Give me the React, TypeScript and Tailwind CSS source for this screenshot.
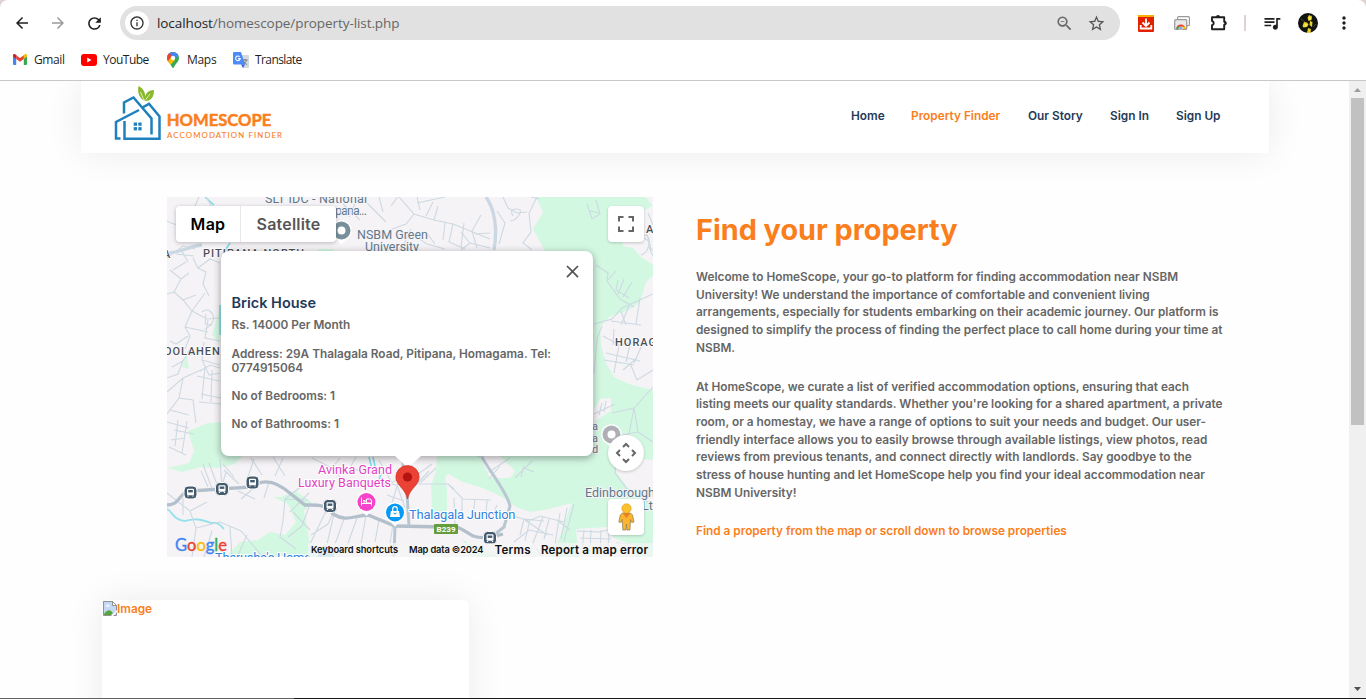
import React from 'react';
import {
  MdArrowBack,
  MdArrowForward,
  MdRefresh,
  MdInfoOutline,
  MdZoomOut,
  MdStarBorder,
  MdQueueMusic,
  MdMoreVert,
  MdClose,
} from 'react-icons/md';

const GmailIcon = () => (
  <svg width="14" height="11" viewBox="0 0 14 11">
    <path d="M0 1.5V10a1 1 0 0 0 1 1h2.2V4.2z" fill="#4285f4" />
    <path d="M14 1.5V10a1 1 0 0 1-1 1h-2.2V4.2z" fill="#34a853" />
    <path d="M10.8 1.2V4.9L14 2.6V1.4C14 .1 12.500-.4 11.500.5z" fill="#fbbc04" />
    <path d="M3.200 1.200 7 4l3.800-2.800v3.700L7 7.700 3.200 4.900z" fill="#ea4335" />
    <path d="M0 1.400v1.200l3.200 2.300V1.200L2.500.5C1.500-.4 0 .1 0 1.400z" fill="#c5221f" />
  </svg>
);

const YouTubeIcon = () => (
  <svg width="16" height="12" viewBox="0 0 16 12">
    <rect width="16" height="12" rx="3" fill="#f00" />
    <path d="M6.200 3.500v5L10.500 6z" fill="#fff" />
  </svg>
);

const MapsIcon = () => (
  <svg width="12" height="16" viewBox="0 0 12 16">
    <defs>
      <clipPath id="pin-clip">
        <path d="M6 0a6 6 0 0 0-6 6c0 3 2 4.200 3.500 6.400C4.800 14 5.200 16 6 16s1.200-2 2.500-3.600C10 10.200 12 9 12 6a6 6 0 0 0-6-6z" />
      </clipPath>
    </defs>
    <g clipPath="url(#pin-clip)">
      <rect width="12" height="16" fill="#34a853" />
      <path d="M0 0h12L6 6-1 14z" fill="#fbbc04" />
      <path d="M0 0h5l1.500 4L1.500 10-2 8z" fill="#ea4335" />
      <path d="M2 0h10v3L7 8 4 5 1.500 2z" fill="#4285f4" />
      <path d="M0 2l2-1 3 3-4 5z" fill="#ea4335" />
      <path d="M1 9l4-5 3 4-4.500 5z" fill="#fbbc04" />
    </g>
    <circle cx="6" cy="6" r="2.200" fill="#fff" />
  </svg>
);

const TranslateIcon = () => (
  <svg width="16" height="16" viewBox="0 0 16 16">
    <path d="M6 3h9a1 1 0 0 1 1 1v11a1 1 0 0 1-1 1H10z" fill="#d5d8dc" />
    <path d="M9.500 8h5M12 7v1M13.500 8c-.6 2-2 3.500-3.500 4M10.500 9c.6 1.500 2 3 3.500 3.500" stroke="#687078" fill="none" strokeWidth=".9" />
    <path d="M1 0h7l4 12.500H1a1 1 0 0 1-1-1V1a1 1 0 0 1 1-1z" fill="#4c8bf5" />
    <path d="m8 12.500 4 0-2 3.500z" fill="#3367d6" />
    <path d="M6.600 4.800A2.300 2.300 0 1 0 7.200 6.600H5" stroke="#fff" fill="none" strokeWidth="1.100" />
  </svg>
);

const DownloadIcon = () => (
  <svg width="16" height="17" viewBox="0 0 16 17">
    <rect y="0" width="16" height="17" rx="1" fill="#e32000" />
    <path d="M0 2V1a1 1 0 0 1 1-1h14a1 1 0 0 1 1 1v1z" fill="#ffad00" />
    <path d="M8 3.500v7M4.500 7.500 8 11l3.500-3.500M2.700 10v3.500h10.600V10" fill="none" stroke="#fff" strokeWidth="1.800" />
  </svg>
);

const CastIcon = () => (
  <svg width="16" height="15" viewBox="0 0 16 15">
    <rect x="3.600" y=".6" width="11.800" height="9" rx="1" fill="#fff" stroke="#999" strokeWidth="1.200" />
    <rect x=".7" y="3.700" width="12" height="9.800" rx="1" fill="#e9eaec" stroke="#999" strokeWidth="1.200" />
    <path d="M2.300 13a4.600 4.600 0 0 1 9.200 0z" fill="#ea4335" />
    <path d="M2.300 13q0-2.500 1.500-3.500L6 13z" fill="#34a853" />
    <path d="M8 10.500h2.800q.7 1 .7 2.500H8z" fill="#fbbc04" />
    <path d="M4.800 13a2.100 2.100 0 0 1 4.200 0z" fill="#4285f4" stroke="#fff" strokeWidth=".6" />
  </svg>
);

const PuzzleIcon = () => (
  <svg width="18" height="18" viewBox="0 0 18 18" fill="none">
    <path d="M2 3.200h12.200v4.600a1.500 1.500 0 0 1 0 3V15.300H2v-4a2.200 2.200 0 0 0 0-4.300z" stroke="#1f1f1f" strokeWidth="1.900" strokeLinejoin="round" />
    <path d="M6 3a2 2 0 0 1 4 0zM14.500 7.300a2 2 0 0 1 0 4z" fill="#1f1f1f" />
  </svg>
);

const Avatar = () => (
  <svg width="20" height="20" viewBox="0 0 20 20">
    <circle cx="10" cy="10" r="10" fill="#111310" />
    <path d="M3 6l4 3M14 2l-2 4M15 14l3-3" stroke="#3d4733" />
    <path d="m11 2 3 1.500-.5 3.500-3 1-1-3zM6 9l3 .5 1.500 2L9 14l-3.500.5-1-1.500zM12 8l2.500 1-.5 5-2.500-2zM10 15l3 1-.5 4H9z" fill="#ead329" />
    <path d="m11 4 2 1-1 2zM7 11l2 1-2 1.500z" fill="#fff6a4" />
  </svg>
);

const Logo = () => (
  <svg width="172" height="60" viewBox="112 84 172 60">
    <g fill="none" stroke="#1f80bd" strokeWidth="2.500">
      <path d="M124 113.500V102.500L133.500 97.500 151.500 118.500v16" />
      <path d="M141.500 108 149 103.800 159.500 116.500V138.700H124.500V121" />
      <path d="M139 110 116 122v16.500h4.500" />
    </g>
    <g fill="#1f80bd">
      <rect x="133.700" y="122.500" width="3.300" height="3.300" />
      <rect x="138.300" y="122.500" width="3.300" height="3.300" />
      <rect x="133.700" y="127.100" width="3.300" height="3.300" />
      <rect x="138.300" y="127.100" width="3.300" height="3.300" />
    </g>
    <path d="M144.500 101c-5-3-7.500-8-6-15 5 2.500 8 7 6 15z" fill="#8ab92d" />
    <path d="M144.500 101c0-7 3-11 9.500-11 0 7-3 11.500-9.500 11z" fill="#8ab92d" />
    <path d="M144.500 101.500 140.500 92M145 100.500l5-6.500" stroke="#fff" strokeWidth=".7" fill="none" />
    <text x="166.800" y="125.500" textLength="104.500" lengthAdjust="spacingAndGlyphs" fontFamily="Lato" fontWeight="700" fontSize="17.500" fill="#fb7e1c" stroke="#fb7e1c" strokeWidth=".5">HOMESCOPE</text>
    <text x="167" y="138.200" textLength="115" fontFamily="Lato" fontSize="7.800" fill="#fb7e1c" stroke="#fb7e1c" strokeWidth=".1">ACCOMODATION FINDER</text>
  </svg>
);

const BusStop = ({ x, y }: { x: number; y: number }) => (
  <g transform={`translate(${x} ${y})`}>
    <rect x="-6.500" y="-6.500" width="13" height="13" rx="4" fill="#455c6e" stroke="#fff" strokeWidth="1" />
    <rect x="-3.500" y="-3.800" width="7" height="6.500" rx="1.200" fill="#fff" />
    <rect x="-2.300" y="-2.500" width="4.600" height="2.400" fill="#455c6e" />
    <path d="M-2.500 3v1M2.500 3v1" stroke="#fff" strokeWidth="1.300" />
  </g>
);

const PlacePin = ({ x, y, color }: { x: number; y: number; color: string }) => (
  <g transform={`translate(${x} ${y})`}>
    <path d="M-4.500 8.500 0 13 4.500 8.500A9.600 9.600 0 1 0-4.500 8.500z" fill="#fff" stroke="#fff" strokeWidth="1.300" />
    <circle r="9" fill={color} />
  </g>
);

const minorRoads = [
  'M167 221c8 4 12 5 20 2l12-26M167 258l16-12 12 3M180 248l8 14M176 254l18 2M186 262l-13 8M206 197l6 10',
  'M193 258l5 10 8 4-3 12 6 12M198 268l12-9 10 4M170 270l11 9 8-6M181 279l-7 13-7 2M174 292l9 8 9 11',
  'M192 311l13-18M183 300l13-5M192 311l15 8 13-1M192 311l-7 16 5 9-5 13M185 327l23 5M208 320l-3 18 15 3',
  'M188 336l-12 8-6-3M190 349l-7 12-11 6M183 361l-5 13-11 4M202 312q5-4 9 0t2 9-8 8',
  'M206 314l-1 10M212 325l-7-1M204 342l-2 18 7 15M202 360l18 5M209 375l11-2M167 392l16-14 18-8M183 378l-4 20-12 16',
  'M179 398l14 2 3 23M170 410l19 5M167 422l22 6M174 430l20 4M171 440l14-2M178 420l-3 26M187 421l-5 32M169 447l17 8',
  'M200 371l10-6 10 3M197 376l22 5M205 367l-3 32M212 370l-1 32M201 394l20 4M199 402l22 2',
  'M167 493l23 18 6 17-4 29M183 498v17M190 511l17-9M196 528l24-6 21 9 20 24M212 531l-8 26M230 527l2 30M247 535l-9 20',
  'M203 464l9 25M209 463l10 27M220 459l2 29M226 472l-5 17M201 471l7 16M234 477l-11-13M239 484l-15-14',
  'M248 477l6-18M262 475l-11-17M275 476l8-18M285 476l-12-19M238 491l17 8M255 487l-14 12M269 482l-5 16',
  'M303 485l-18 14-2 22M285 499l23 1M309 493l-19 19M293 512l17 18M283 521l-3 16 16 12M310 504l-8 22-14 11',
  'M311 535l17-11 6-13M328 507l-18 37M335 510l-8 34M344 519l-9 25M358 515l-11 31M366 515l-5 29M379 520l-4 22M393 524l-4 26',
  'M340 458l-8 10 10 12M332 468l-20-10M356 457l-5 9 14 9M379 460l13 23 13-10M379 483l18 2 8 23M387 495l17 6M399 480l-8 26M411 490l18-19M414 477l18-13M420 483l16-15',
  'M399 197l15 17 20 6 19 4 37 15M414 214l-8 10-16 6M417 203l28-6M420 210l-3-13M426 216l7-14M434 220l4-14M445 223l-2 17M453 224l-4 18 16 7',
  'M461 232l9 11 20 5M464 223l-3 24M481 215l-9 16 5 17M475 234l15-1M470 243l-9 7M407 231l20 13 18 5M426 232l9 12M411 229l-8 17',
  'M503 197l5 11 9 5 10-1M513 216q-4-7 3-7t3 6-9 6M537 197l-8 16 2 19-8 11 9 7M497 211l8 12-6 21M539 199l-8-2',
  'M343 204l17 16M358 197l-9 20M367 203l19 19M379 197l4 15M391 206l8-11',
  'M587 204l5 15 8-5-4-14M590 211l10 2M596 265l12 8-1 8 13 18M608 280l8-9M618 280l-2 10 13 8M624 279l-6 15M632 282l-9 15M620 299l14 8',
  'M641 236q9-3 8 7t-8 12M646 231l5 18 2 1M628 227l22 15M648 213l5 12M649 247l4 9',
  'M594 324l18-5 10-11 31-14M611 321l30 4M621 311l5 14M629 306l-8 19M640 298l-4 26M603 336l16 9 19-4M614 329l-1 16M606 353l34 8M619 345l-5 28M602 326l-5 13-3 35',
  'M630 345l-4 17M642 345l-8 18M623 370l14-12M604 360l30 5M630 363l7 17 16-10',
  'M594 414l21-10M602 403l-3 12M606 401l-2 11M653 387l-19 21-22 5M634 408l4 24 15 10M634 408l-5 26-13 5M638 432l-22 4M616 453l-1 20 12 16 26 16M606 435l8 14',
  'M410 484h38l15 15 28 1M448 484l6 5M462 499v12M475 499l-2 17M487 500l-1 15M497 505l-6 14M454 498l1 29M477 457l12-2M489 472l21-14M489 479l11-13M515 478l17-17M524 466l-3 11M524 468l10 4',
  'M514 516l15 5 11-5 24 6M520 535l4-16 20 2M525 520l22 15M530 519l-5 22M543 517l-10 26 9 14M514 542l15-12 24 5M549 519l-5 20M560 513l-5 31M567 508l-6 31M574 504l-10 37M557 520l13 10',
  'M577 531l23 1 16-4M580 538l31 1M584 530l-2 21M591 530l-1 22M601 530l-1 22M609 528l-1 27M616 543l15 1',
];

const MapCanvas = () => (
  <svg className="block" width="486" height="360" viewBox="167 197 486 360">
    <rect x="167" y="197" width="486" height="360" fill="#f5f3f5" />
    <g fill="#d3f8e2">
      <path d="M536 197l7 15-10 17 13 24 34 8 14 90v65l-80 36H437l-1 19-5 15 1 23 8 11h12l20 37h181V390l-24-6-15-7-8-14-5-18-1-18 9-10 20-7 11-8 6-20 9-8v-8l-13-8-9-10-10-2-1-16 7-11 23-13v-1l-12-15-15-5-25-6z" />
      <path d="M167 468l22-5 5-12-6-20 20-8 13-1v23l21 11-7 8-17 4-17-1-19 5z" />
      <path d="M281 497l14-6 17 11-8 9 6 33 12 13H226l14-15 18-2 12-8 15 3 11-13-8-18-15-7z" />
      <path d="M219 311v33l-7-10z" /><path d="M187 355l2 14-7-2z" /><path d="M319 249h15v4h-19z" />
    </g>
    <g fill="#f5f3f5">
      <path d="M445 477l3-3 15 8 20 6 23 11 10 8 14 5 19-3 23-6-7 17-6 19-12 20h-40l-30-10-25-17-5-20v-20z" />
      <path d="M480 456h20l15 15-5 7h-20z" />
      <path d="M594 409l6-10 11-1v13l-10 6-7 6z" />
      <path d="M576 529l32-2 6 11 22 8v13h-57z" />
      <path d="M614 456l2 16 11 15 26 17v-44z" />
      <path d="M612 370l18 10 23 7v-17z" />
    </g>
    <path d="M167 509c6 3 6 11 18 12 12-4 20 0 26 2 8-1 10 3 13 6" stroke="#94e1eb" strokeWidth="1.800" fill="none" />
    <path d="M205 197l9 8M230 243l-6 9M369 457l3 12M373 457l3 14 5 3-3 9M220 305v30" stroke="#7dddea" strokeWidth="1.600" fill="none" />
    <g stroke="#cdd9e2" strokeWidth="1.100" fill="none">
      {minorRoads.map((d) => <path key={d} d={d} />)}
    </g>
    <path d="M167 253c13 0 22-7 35-8M486 197c8 11 12 30 8 53" stroke="#cbd7e2" strokeWidth="3.300" fill="none" />
    <path d="M167 505c14 0 11-13 24-14l61-4c14-11 29-2 39 7l14 11c13 0 21-1 28 9 13 8 20 2 35 1l27 11 48 1c14-3 20 3 30 9 12 4 22 0 30-2" stroke="#b3c0cb" strokeWidth="3.300" fill="none" />
    <path d="M482 457c4 9 26 36 28 49l-6 21-14 11M403 457v30M407 493l2 33M395 526l-1 31" stroke="#b9c7d2" strokeWidth="3" fill="none" />
    <g fontFamily="Roboto" fontSize="12.500" fill="#60788a" stroke="#f5f3f5" strokeWidth="2" paintOrder="stroke">
      <text x="265" y="202.500" textLength="102">SLT IDC - National</text>
      <text x="335" y="215" textLength="32">pana...</text>
      <text x="357" y="238.500" textLength="71">NSBM Green</text>
      <text x="365" y="251" textLength="54">University</text>
      <text x="585" y="497" textLength="70">Edinborough</text>
      <text x="642" y="510">Ltd</text>
      <text x="592" y="430" fontSize="11">a</text><text x="592" y="441.500" fontSize="11">a</text><text x="592" y="452.500" fontSize="11">d</text>
    </g>
    <g fontFamily="Roboto" fontSize="11" fontWeight="500" fill="#4c4f54" stroke="#fff" strokeWidth="1.500" paintOrder="stroke">
      <text x="203" y="256.500" textLength="101">PITIPANA NORTH</text>
      <text x="164" y="355" textLength="64">OOLAHENA</text>
      <text x="163" y="258">A</text>
      <text x="615" y="346" letterSpacing="1">HORAGALA</text>
      <text x="646" y="233">ALA</text>
    </g>
    <PlacePin x={341.500} y={230.500} color="#78909c" /><PlacePin x={611.500} y={434.500} color="#aeb0b5" />
    <circle cx="341.500" cy="230.500" r="4" fill="#fff" /><circle cx="611.500" cy="434.500" r="4" fill="#fff" />
    <g fontFamily="Roboto" fontSize="12.500" fill="#e33ec4" stroke="#fff" strokeWidth="2" paintOrder="stroke">
      <text x="318" y="474" textLength="74">Avinka Grand</text>
      <text x="298" y="486.500" textLength="93">Luxury Banquets</text>
    </g>
    <PlacePin x={366.500} y={502} color="#f743ca" />
    <path d="M361.500 497.500v8M361.500 503.500h10v2M363 500.500h2.200v1.500H363M366.500 499h3q2 0 2 2v2h-5z" stroke="#fff" fill="none" />
    <PlacePin x={395} y={512.500} color="#079af5" />
    <path d="M391 511h8l1 6h-10z" fill="#fff" /><path d="M392.700 511v-2a2.300 2.300 0 0 1 4.600 0v2" stroke="#fff" fill="none" strokeWidth="1.200" />
    <path d="M393.500 513q1.500 2 3 0" stroke="#079af5" fill="none" />
    <BusStop x={190.500} y={492.500} /><BusStop x={222} y={489} /><BusStop x={252.500} y={482.500} /><BusStop x={330} y={506} /><BusStop x={490} y={538} />
    <g fontFamily="Roboto" fontSize="13" fill="#3283dd" stroke="#fff" strokeWidth="2" paintOrder="stroke">
      <text x="409" y="519" textLength="106.500">Thalagala Junction</text>
      <text x="215" y="562" textLength="96">Tharusha's Home</text>
    </g>
    <path d="M318 557v-3a8 8 0 0 1 16 0v3z" fill="#91cef3" />
    <rect x="434" y="524" width="24" height="10" rx="1" fill="#669d3c" />
    <text x="436.500" y="532.300" textLength="19" fontFamily="Roboto" fontWeight="700" fontSize="8" fill="#fff">B239</text>
    <path d="M308 543h345v14H308z" fill="#f5f5f5" opacity=".72" />
    <text x="175" y="551" textLength="52" lengthAdjust="spacingAndGlyphs" fontFamily="Lato" fontSize="18" strokeWidth=".4">
      <tspan fill="#4285f4" stroke="#4285f4">G</tspan><tspan fill="#ea4335" stroke="#ea4335">o</tspan><tspan fill="#fbbc04" stroke="#fbbc04">o</tspan><tspan fill="#4285f4" stroke="#4285f4">g</tspan><tspan fill="#34a853" stroke="#34a853">l</tspan><tspan fill="#ea4335" stroke="#ea4335">e</tspan>
    </text>
    <g fontFamily="Inter" fontSize="9.300" fontWeight="600" fill="#111">
      <text x="311" y="553" textLength="87">Keyboard shortcuts</text>
      <text x="409" y="553" textLength="74.500">Map data ©2024</text>
      <text x="494.500" y="554" fontSize="11.600" textLength="36">Terms</text>
      <text x="541" y="554" fontSize="11.600" textLength="107">Report a map error</text>
    </g>
  </svg>
);

const MarkerIcon = () => (
  <svg width="25" height="35" viewBox="0 0 25 35">
    <path d="M12.500.5A11.600 11.600 0 0 0 .9 12c0 8.500 9 10.500 11.600 22C15.100 22.500 24.100 20.500 24.100 12A11.600 11.600 0 0 0 12.500.5z" fill="#ea4335" stroke="#cf3527" strokeWidth=".7" />
    <circle cx="12.500" cy="12" r="4.600" fill="#b31412" />
  </svg>
);

const Pegman = () => (
  <svg width="17" height="28" viewBox="0 0 17 28">
    <path d="M4.500 10h8l2 2 1.500 7-2.300.5-1.200-3-.5 10.500H9l-.5-6-.5 6H4.800l-.5-10.500-1.200 3-2.300-.5 1.500-7z" fill="#fbb42c" stroke="#8d7a52" strokeWidth=".7" />
    <path d="M4.500 10h8l-4 5z" fill="#e58025" />
    <circle cx="8.500" cy="5.500" r="4.700" fill="#fbc02d" stroke="#d99519" strokeWidth=".6" />
  </svg>
);

const FullscreenIcon = () => (
  <svg width="16" height="16" viewBox="0 0 16 16" fill="none" stroke="#666" strokeWidth="2">
    <path d="M1 5.500V1h4.500M10.500 1H15v4.500M15 10.500V15h-4.500M5.500 15H1v-4.500" />
  </svg>
);

const CameraControl = () => (
  <svg width="22" height="22" viewBox="0 0 22 22" fill="none" stroke="#666" strokeWidth="2">
    <path d="m8 5 3-3 3 3M8 17l3 3 3-3M5 8l-3 3 3 3M17 8l3 3-3 3" />
  </svg>
);

const BrokenImage = () => (
  <svg className="shrink-0" width="14" height="15" viewBox="0 0 14 15">
    <path d="M.5.500H9.500L13.500 4.500V14.500H.5z" fill="#c5d8f5" stroke="#929292" />
    <path d="M9.500.5v4h4z" fill="#fff" stroke="#929292" />
    <path d="M2.500 5.500q0-1 1-1 1-2 2.500 0 1 0 1 1z" fill="#fff" />
    <path d="M1 14v-1q5-7 9-1l-2 2z" fill="#55a63a" />
    <path d="m8 15 6-6v2l-4 4z" fill="#fff" />
  </svg>
);

const bookmarks = [
  { label: 'Gmail', icon: <GmailIcon />, box: 'w-[68px] gap-[7px]', text: 'tracking-[-0.4px]' },
  { label: 'YouTube', icon: <YouTubeIcon />, box: 'w-[86px] gap-[6px]', text: 'tracking-[-0.5px]' },
  { label: 'Maps', icon: <MapsIcon />, box: 'w-[66px] gap-[8px]', text: 'tracking-[-0.3px]' },
  { label: 'Translate', icon: <TranslateIcon />, box: 'w-[80px] gap-[6px]', text: 'tracking-[-0.6px]' },
];

const intro = [
  'Welcome to HomeScope, your go-to platform for finding accommodation near NSBM',
  'University! We understand the importance of comfortable and convenient living',
  'arrangements, especially for students embarking on their academic journey. Our platform is',
  'designed to simplify the process of finding the perfect place to call home during your time at',
  'NSBM.',
];

const details = [
  'At HomeScope, we curate a list of verified accommodation options, ensuring that each',
  "listing meets our quality standards. Whether you're looking for a shared apartment, a private",
  'room, or a homestay, we have a range of options to suit your needs and budget. Our user-',
  'friendly interface allows you to easily browse through available listings, view photos, read',
  'reviews from previous tenants, and connect directly with landlords. Say goodbye to the',
  'stress of house hunting and let HomeScope help you find your ideal accommodation near',
  'NSBM University!',
];

const Lines = ({ lines }: { lines: string[] }) => (
  <p>{lines.map((line) => <span key={line} className="block whitespace-nowrap">{line}</span>)}</p>
);

const BrowserChrome = () => (
  <div className="h-[81px] shrink-0 bg-[#ddd3d1]">
    <div className="flex h-full flex-col rounded-t-lg border-b border-[#c8c8c8] bg-white pt-[6px] font-['Open_Sans',sans-serif]">
      <div className="flex h-[34px] items-center">
        <MdArrowBack size={18} className="ml-[13px] text-[#1f1f1f]" />
        <MdArrowForward size={18} className="ml-[18px] text-[#9b9b9b]" />
        <MdRefresh size={19} className="ml-[18px] text-[#1f1f1f]" />
        <div className="ml-[16px] flex h-[34px] w-[1000px] items-center rounded-full bg-[#e1e1e1] pl-[5px]">
          <span className="flex size-6 items-center justify-center rounded-full bg-white"><MdInfoOutline size={16} className="text-[#333]" /></span>
          <span className="ml-2 whitespace-nowrap text-[13.5px] tracking-[-0.08px] text-[#666]"><span className="text-[#1f1f1f]">localhost</span>/homescope/property-list.php</span>
          <MdZoomOut size={19} className="mr-[13px] ml-auto text-[#666]" />
          <MdStarBorder size={19} className="mr-[14px] text-[#555]" />
        </div>
        <div className="ml-[18px]"><DownloadIcon /></div>
        <div className="ml-[20px]"><CastIcon /></div>
        <div className="ml-[20px]"><PuzzleIcon /></div>
        <div className="ml-[16px] h-4 w-[2px] bg-[#ddd3d1]" />
        <MdQueueMusic size={20} className="ml-[16px] text-[#1f1f1f]" />
        <div className="ml-[16px]"><Avatar /></div>
        <MdMoreVert size={20} className="ml-[16px] text-[#1f1f1f]" />
      </div>
      <div className="flex h-[39px] items-center pl-[13px] text-[12px] text-[#1f1f1f]">
        {bookmarks.map((b) => (
          <div key={b.label} className={`flex shrink-0 items-center ${b.box}`}>{b.icon}<span className={b.text}>{b.label}</span></div>
        ))}
      </div>
    </div>
  </div>
);

const Navbar = () => (
  <nav className="ml-[81px] flex h-[72px] w-[1188px] shrink-0 items-start bg-white pl-[31px] shadow-[0_0_36px_rgba(0,0,0,0.08)]">
    <div className="mt-[3px]"><Logo /></div>
    <div className="ml-auto flex h-[72px] items-center text-[11.83px] font-semibold text-[#1f3a58]">
      <span className="w-[60px]">Home</span>
      <span className="w-[117px] text-[#fb7e1c]">Property Finder</span>
      <span className="w-[82px]">Our Story</span>
      <span className="w-[66px]">Sign In</span>
      <span className="w-[93px]">Sign Up</span>
    </div>
  </nav>
);

const PropertyMap = () => (
  <section className="relative h-[360px] w-[486px] shrink-0 overflow-hidden">
    <MapCanvas />
    <div className="absolute top-[9px] left-[9px] flex h-9 w-40 items-center rounded-sm bg-white text-[16px] font-semibold shadow-[0_1px_4px_rgba(0,0,0,0.25)]">
      <span className="flex h-full w-[65px] items-center justify-center border-r border-[#e8e8e8] tracking-[0.3px] text-black">Map</span>
      <span className="flex-1 text-center tracking-[0.2px] text-[#565656]">Satellite</span>
    </div>
    <div className="absolute top-[9px] left-[441px] flex size-9 items-center justify-center rounded-sm bg-white shadow-[0_1px_3px_rgba(0,0,0,0.2)]"><FullscreenIcon /></div>
    <div className="absolute top-[238px] left-[441px] flex size-9 items-center justify-center rounded-full bg-white shadow-[0_1px_3px_rgba(0,0,0,0.2)]"><CameraControl /></div>
    <div className="absolute top-[302px] left-[441px] flex size-9 items-center justify-center rounded-sm bg-white shadow-[0_1px_3px_rgba(0,0,0,0.2)]"><Pegman /></div>
    <div className="absolute top-[54px] left-[54px] h-[205px] w-[372px] rounded-lg bg-white px-[10.500px] text-[11.8px] font-semibold text-[#666] shadow-[0_2px_7px_1px_rgba(0,0,0,0.3)]">
      <div className="flex h-[43px] items-center justify-end pb-[2px]"><MdClose size={21} className="text-[#555]" /></div>
      <h2 className="text-[14.500px] leading-[18px] font-semibold text-[#1f3a58]">Brick House</h2>
      <p className="mt-[6px] leading-[14px]">Rs. 14000 Per Month</p>
      <p className="mt-[15px] leading-[14px] whitespace-nowrap">Address: 29A Thalagala Road, Pitipana, Homagama. Tel:<br />0774915064</p>
      <p className="mt-[14px] leading-[14px]">No of Bedrooms: 1</p>
      <p className="mt-[14px] leading-[14px]">No of Bathrooms: 1</p>
    </div>
    <svg className="absolute top-[258px] left-[227px]" width="28" height="13" viewBox="0 0 28 13"><path d="M0 0h28L14 13z" fill="#fff" /></svg>
    <div className="absolute top-[268px] left-[228px]"><MarkerIcon /></div>
  </section>
);

const Scrollbar = () => (
  <div className="flex w-[17px] shrink-0 flex-col items-center bg-[#f0f0f0]">
    <svg width="17" height="17" viewBox="0 0 17 17"><path d="M5 11h7L8.500 7z" fill="#9c9c9c" /></svg>
    <div className="h-[327px] w-[13px] bg-[#c1c1c1]" />
    <svg className="mt-auto" width="17" height="17" viewBox="0 0 17 17"><path d="M5 6h7l-3.500 4z" fill="#505050" /></svg>
  </div>
);

export default function App() {
  return (
    <div className="flex h-[699px] w-[1366px] flex-col overflow-hidden bg-white font-['Inter',sans-serif]">
      <BrowserChrome />
      <div className="flex h-[617px] shrink-0">
        <main className="flex w-[1349px] flex-col overflow-hidden bg-[#fefefe]">
          <Navbar />
          <div className="mt-[44px] ml-[167px] flex h-[360px] shrink-0">
            <PropertyMap />
            <section className="ml-[43px] text-[11.82px] leading-[17.65px] font-semibold text-[#666]">
              <h1 className="mt-[15px] mb-[21px] text-[28.8px] leading-[36px] font-bold text-[#fb7e1c]">Find your property</h1>
              <Lines lines={intro} />
              <div className="h-[21.5px]" />
              <Lines lines={details} />
              <p className="mt-[21px] text-[#fb7e1c]">Find a property from the map or scroll down to browse properties</p>
            </section>
          </div>
          <article className="mt-[43px] ml-[102px] flex h-[200px] w-[367px] shrink-0 items-start rounded-md bg-white pt-[1px] pl-[1px] shadow-[0_0_36px_rgba(0,0,0,0.08)]">
            <BrokenImage /><span className="text-[11.8px] leading-[16px] font-semibold text-[#fb7e1c]">Image</span>
          </article>
        </main>
        <Scrollbar />
      </div>
      <div className="flex h-px shrink-0 bg-[#181818]"><div className="w-[294px] bg-[#626262]" /></div>
    </div>
  );
}
